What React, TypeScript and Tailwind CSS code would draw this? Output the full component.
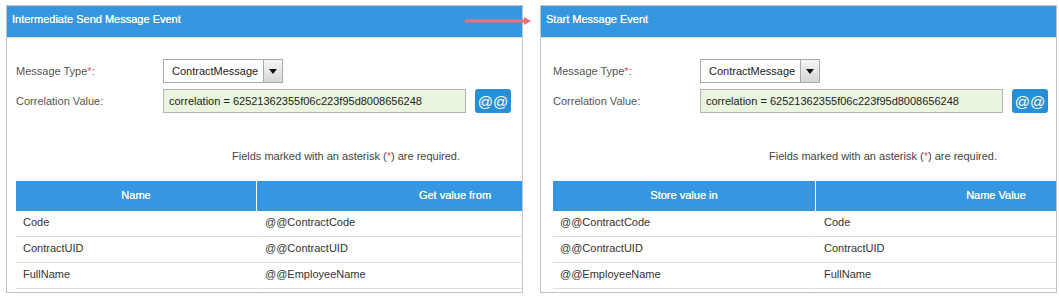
type Row = [string, string];

const font = { fontFamily: '"Liberation Sans", Arial, sans-serif' };

function Arrow() {
  return (
    <svg className="absolute left-[464px] top-[16px]" width="70" height="10" viewBox="0 0 70 10">
      <line x1="1" y1="5" x2="62" y2="5" stroke="#ef6f7a" strokeWidth="3" />
      <path d="M60 1 L67 5 L60 9 Z" fill="#ef6f7a" />
    </svg>
  );
}

function Panel({
  title,
  pad,
  tableW,
  col1,
  heads,
  rows,
}: {
  title: string;
  pad: string;
  tableW: string;
  col1: string;
  heads: [string, string];
  rows: Row[];
}) {
  return (
    <div className="w-[517px] h-[288px] border border-[#c3c3c3] bg-white overflow-hidden shrink-0">
      <div className="h-[32px] bg-[#3597df] border-b border-[#e2e2e2] pl-[5px] pb-[4px] flex items-center text-white text-[11px] [text-shadow:0_0_0.3px_#fff]">
        {title}
      </div>
      <div className={`${pad} pt-[21px]`}>
        <div className="flex items-center h-[24px]">
          <div className="w-[147px] text-[#555] text-[11px]">
            Message Type<span className="text-[#e0565b]">*</span>:
          </div>
          <div className="w-[120px] h-[24px] border border-[#a9a9a9] flex items-center bg-white">
            <div className="flex-1 pl-[8px] text-[11px] text-[#222]">ContractMessage</div>
            <div className="w-[19px] h-[22px] border-l border-[#a9a9a9] bg-gradient-to-b from-[#f6f6f6] to-[#d6d6d6] flex items-center justify-center">
              <div className="w-0 h-0 border-l-[4px] border-r-[4px] border-t-[5px] border-l-transparent border-r-transparent border-t-[#111]" />
            </div>
          </div>
        </div>
        <div className="flex items-center h-[24px] mt-[6px]">
          <div className="w-[147px] text-[#555] text-[11px]">Correlation Value:</div>
          <div className="w-[303px] h-[24px] border border-[#b3b3b3] bg-[#e9f5de] flex items-center pl-[5px] text-[11px] text-[#222]">
            correlation = 62521362355f06c223f95d8008656248
          </div>
          <div className="ml-[9px] w-[36px] h-[24px] rounded-[3px] bg-[#2590d6] flex items-center justify-center text-white text-[15px] leading-none">
            @@
          </div>
        </div>
        <div className="mt-[37px] pl-[216px] text-[11px] text-[#444] h-[12px] leading-[12px]">
          Fields marked with an asterisk (<span className="text-[#e0565b]">*</span>) are required.
        </div>
        <table className={`${tableW} table-fixed mt-[19px] border-separate border-spacing-0 text-[11px] text-[#333]`}>
          <thead>
            <tr className="h-[30px] bg-[#3597df] text-white">
              <th className={`${col1} border-r border-white font-normal pb-[2px] [text-shadow:0_0_0.5px_#fff]`}>{heads[0]}</th>
              <th className="font-normal pb-[2px] [text-shadow:0_0_0.5px_#fff]">{heads[1]}</th>
            </tr>
          </thead>
          <tbody>
            {rows.map((r) => (
              <tr key={r[0]} className="h-[26px]">
                <td className="border-b border-r border-b-[#dedede] border-r-white pl-[7px] pb-[3px]">{r[0]}</td>
                <td className="border-b border-[#dedede] pl-[8px] pb-[3px]">{r[1]}</td>
              </tr>
            ))}
          </tbody>
        </table>
      </div>
    </div>
  );
}

export default function App() {
  const rows: Row[] = [
    ['Code', '@@ContractCode'],
    ['ContractUID', '@@ContractUID'],
    ['FullName', '@@EmployeeName'],
  ];
  const flipped: Row[] = rows.map(([a, b]) => [b, a]);

  return (
    <div className="relative w-[1059px] h-[300px] bg-white" style={font}>
      <div className="flex gap-[17px] pl-[6px] pt-[5px]">
        <Panel
          title="Intermediate Send Message Event"
          pad="pl-[9px]"
          tableW="w-[637px]"
          col1="w-[241px]"
          heads={['Name', 'Get value from']}
          rows={rows}
        />
        <Panel
          title="Start Message Event"
          pad="pl-[12px]"
          tableW="w-[623px]"
          col1="w-[263px]"
          heads={['Store value in', 'Name Value']}
          rows={flipped}
        />
      </div>
      <Arrow />
    </div>
  );
}
